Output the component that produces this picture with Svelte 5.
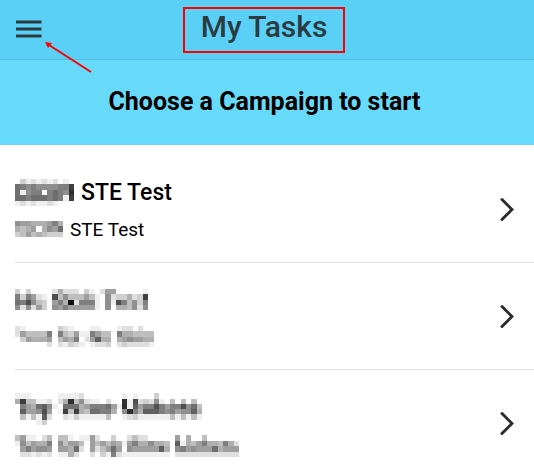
<script lang="ts">
	// Hidden words are drawn as a mosaic, one hex digit of darkness per cell.
	const campaigns = [
		{
			id: 1,
			name: "STE Test",
			detail: "STE Test",
			nameMask: ["03121212010", "9878777788c", "9178808987d", "9989998981c", "12121121000"],
			detailMask: ["766555685", "545605769", "346454333"],
		},
		{
			id: 2,
			name: "",
			detail: "",
			nameMask: [
				"3030000252220310266000001",
				"8386210b4744464107233523c",
				"98b7430685f28881071b84738",
				"7272630768666661070554727",
			],
			detailMask: [
				"21000000321000110001220200",
				"26444480843611864408554444",
				"036555604658026a5505676655",
				"00000020213210122302322221",
			],
		},
		{
			id: 3,
			name: "",
			detail: "",
			nameMask: [
				"00000000000000000000000000000000000",
				"11100000111120000000101000300000000",
				"5c44112025d472110200d1b232710404040",
				"08659a71099956888961d1a688b8688b794",
				"0a667b601c4c549988507d85aaa878677a5",
				"04141a20021311111400123111111414141",
				"00001300000000000000000000000000000",
			],
			detailMask: [
				"000000000000000000000000000000000000000000",
				"461102404410116200300242200000605004000000",
				"174655807466406464651685575540a15468554852",
				"068677606659206246960766666a50786766695666",
				"022121201152002031821111111110222222222222",
			],
		},
	];

	const shade = (digit: string) => 255 - parseInt(digit, 16) * 16;
</script>

{#snippet mosaic(rows: string[])}
	<svg
		class="mosaic"
		style="width: {Math.round((rows[0].length * 16) / 3)}px; height: {Math.round((rows.length * 16) / 3)}px"
		viewBox="0 0 {rows[0].length} {rows.length}"
		preserveAspectRatio="none"
		aria-hidden="true"
	>
		{#each rows as row, y}
			{#each row as digit, x}
				{#if digit !== "0"}
					<rect {x} {y} width="1" height="1" fill="rgb({shade(digit)}, {shade(digit)}, {shade(digit)})" />
				{/if}
			{/each}
		{/each}
	</svg>
{/snippet}

<div class="page">
	<header class="toolbar">
		<button class="menu" aria-label="Menu">
			<svg width="26" height="18" viewBox="0 0 26 18" aria-hidden="true">
				<path d="M0 2h25.5M0 9h25.5M0 16h25.5" stroke="#2b3c40" stroke-width="3" />
			</svg>
		</button>
		<h1>My Tasks</h1>
		<svg class="arrow" width="50" height="34" viewBox="0 0 50 34" aria-hidden="true">
			<path d="M48 32L6 5" stroke="#ff0000" stroke-width="2" />
			<path d="M2 2l7 1-4 5z" fill="#ff0000" />
		</svg>
	</header>

	<h2>Choose a Campaign to start</h2>

	<ul>
		{#each campaigns as campaign (campaign.id)}
			<li>
				<button class="campaign" aria-label={campaign.name || "Campaign"}>
					<span class="text">
						<span class="name">
							{@render mosaic(campaign.nameMask)}
							{campaign.name}
						</span>
						<span class="detail">
							{@render mosaic(campaign.detailMask)}
							{campaign.detail}
						</span>
					</span>
					<svg class="chevron" width="14" height="24" viewBox="0 0 14 24" aria-hidden="true">
						<path d="M2 2.5L12 12.5L2 22.5" fill="none" stroke="#2c2c2c" stroke-width="3" stroke-linecap="round" />
					</svg>
				</button>
			</li>
		{/each}
	</ul>
</div>

<style>
	:global(body) {
		margin: 0;
		background: #fff;
	}

	.page {
		font-family: Roboto, sans-serif;
		color: #000;
		overflow: hidden;
	}

	button {
		padding: 0;
		border: 0;
		background: none;
		font: inherit;
		color: inherit;
		cursor: pointer;
	}

	.toolbar {
		position: relative;
		display: grid;
		grid-template-columns: 1fr auto 1fr;
		align-items: center;
		box-sizing: border-box;
		height: 60px;
		padding: 0 22px 0 16px;
		border-bottom: 1px solid #55bfdf;
		background: #5bd0f6;
	}

	.menu {
		display: flex;
		justify-self: start;
		padding-bottom: 2px;
	}

	h1 {
		box-sizing: border-box;
		height: 46px;
		margin: 0;
		padding: 0 16px;
		border: 2px solid #ff0000;
		color: #2b3c40;
		font-size: 30px;
		font-weight: 500;
		line-height: 36px;
	}

	/* Callout pointing at the menu button */
	.arrow {
		position: absolute;
		top: 40px;
		left: 43px;
	}

	h2 {
		margin: 0;
		padding: 26px 5px 27px 0;
		background: #68daf9;
		font-size: 25px;
		font-weight: 700;
		line-height: 32px;
		text-align: center;
	}

	ul {
		margin: 0;
		padding: 11px 0 0 15px;
		list-style: none;
	}

	li {
		border-bottom: 1px solid #e4e4e4;
	}

	.campaign {
		display: flex;
		align-items: center;
		justify-content: space-between;
		width: 100%;
		height: 106px;
		padding-right: 20px;
		text-align: left;
	}

	.text {
		display: grid;
		gap: 5px;
		padding-top: 3px;
	}

	.name,
	.detail {
		display: flex;
		align-items: center;
		gap: 7px;
		height: 32px;
		white-space: nowrap;
	}

	.name {
		font-size: 23px;
		font-weight: 500;
	}

	.detail {
		font-size: 19px;
	}

	.mosaic {
		flex: none;
		shape-rendering: crispEdges;
	}
</style>
